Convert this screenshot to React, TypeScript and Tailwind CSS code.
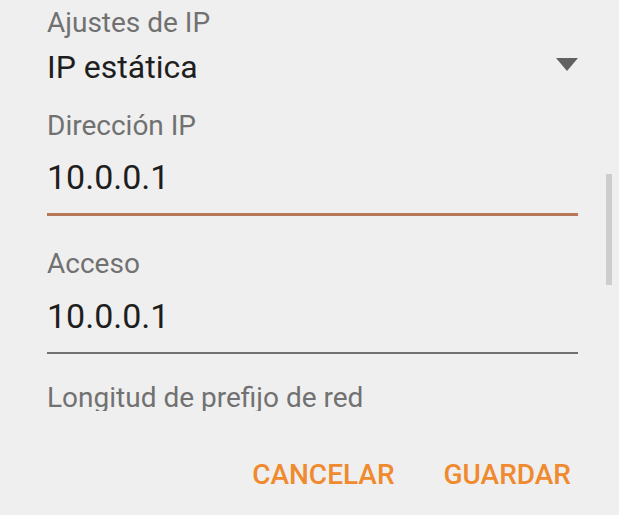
import React from "react";

const font = { fontFamily: "Roboto, 'Noto Sans', Arial, sans-serif" };

const Label: React.FC<{ text: string; className?: string }> = ({ text, className = "" }) => (
  <div className={`text-[28px] leading-[30px] text-[#717171] ${className}`}>{text}</div>
);

const Value: React.FC<{ text: string; className?: string }> = ({ text, className = "" }) => (
  <div className={`leading-[38px] text-[#1e1e1e] ${className}`}>{text}</div>
);

export default function App() {
  return (
    <div
      className="relative w-[619px] h-[515px] bg-[#efefef] overflow-hidden"
      style={font}
    >
      {/* scroll thumb */}
      <div className="absolute left-[606px] top-[174px] w-[6px] h-[111px] bg-[#cdcdcd]" />

      {/* scrollable form */}
      <div className="h-[411px] overflow-hidden pl-[47px] pr-[41px]">
        <Label text="Ajustes de IP" className="mt-[8px]" />
        <div className="mt-[10px] flex items-center justify-between">
          <Value text="IP estática" className="text-[32px]" />
          <svg width="22" height="13" viewBox="0 0 22 13" className="mt-[-6px]">
            <path d="M0 0 L22 0 L11 13 Z" fill="#616161" />
          </svg>
        </div>

        <Label text="Dirección IP" className="mt-[25px]" />
        <Value text="10.0.0.1" className="mt-[17px] text-[34px]" />
        <div className="mt-[17px] h-[3px] bg-[#b7785a]" />

        <Label text="Acceso" className="mt-[33px]" />
        <Value text="10.0.0.1" className="mt-[18px] text-[34px]" />
        <div className="mt-[17px] h-[2px] bg-[#707070]" />

        <Label text="Longitud de prefijo de red" className="mt-[29px]" />
      </div>

      {/* actions */}
      <div className="mt-[48px] flex justify-end gap-[49px] pr-[48px]">
        <button className="text-[28px] leading-[32px] font-medium text-[#ef8a2e]">
          CANCELAR
        </button>
        <button className="text-[28px] leading-[32px] font-medium text-[#ef8a2e]">
          GUARDAR
        </button>
      </div>
    </div>
  );
}
